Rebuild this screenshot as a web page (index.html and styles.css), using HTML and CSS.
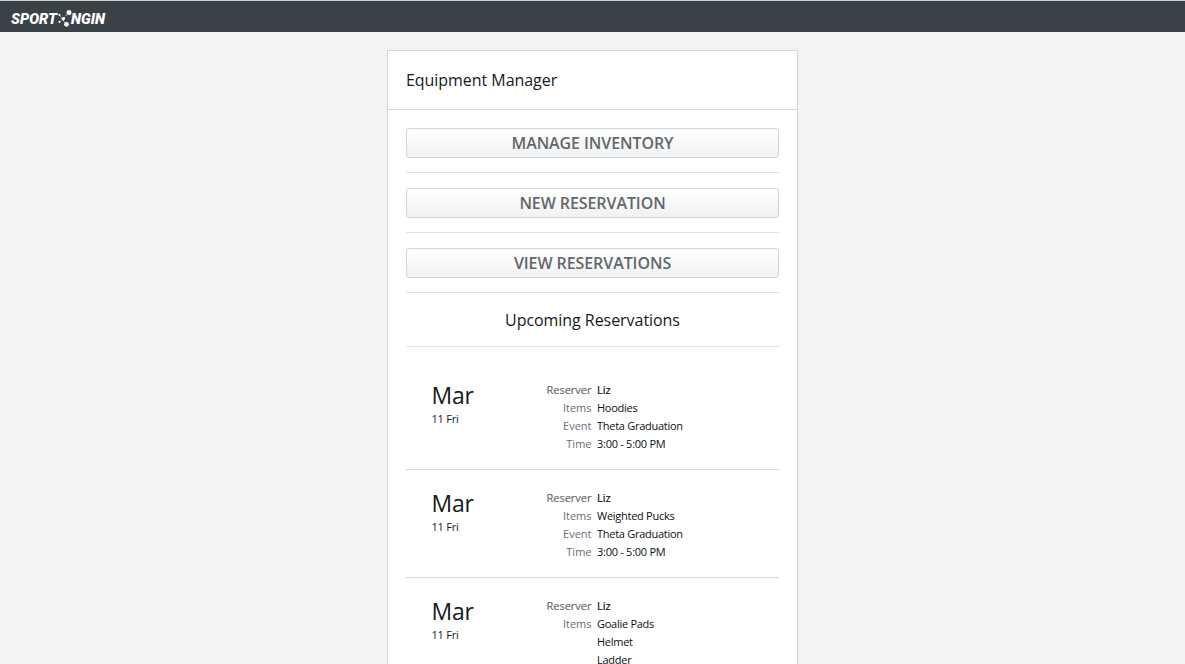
FILE: index.html
```html
<!DOCTYPE html>
<html lang="en">
<head>
<meta charset="utf-8">
<title>Equipment Manager</title>
<link rel="stylesheet" href="styles.css">
</head>
<body>
<header class="topbar">
  <svg class="logo" width="100" height="22" viewBox="0 0 100 22" role="img" aria-label="Sport Ngin">
    <g class="logo-text">
      <text x="1" y="14.6" textLength="46" lengthAdjust="spacingAndGlyphs">SPORT</text>
      <text x="61" y="14.6" textLength="34" lengthAdjust="spacingAndGlyphs">NGIN</text>
    </g>
    <g class="logo-mark">
      <path d="M49.5 6 56 15M59 3.500 50.500 12.500"/>
      <circle cx="59" cy="3.500" r="2.500"/>
      <circle cx="56.500" cy="15.300" r="2.400"/>
      <circle cx="49.500" cy="6" r="1.100"/>
      <circle cx="49.500" cy="12.800" r="1.100"/>
      <circle cx="53.500" cy="9.500" r="1.600"/>
    </g>
  </svg>
</header>
<main class="card">
  <h1 class="card-title">Equipment Manager</h1>
  <div class="card-body">
    <div class="action"><button class="button">MANAGE INVENTORY</button></div>
    <div class="action"><button class="button">NEW RESERVATION</button></div>
    <div class="action"><button class="button">VIEW RESERVATIONS</button></div>
    <h2 class="section-title">Upcoming Reservations</h2>
    <div class="reservations">
      <section class="reservation">
        <div class="date"><div class="month">Mar</div><div class="day">11 Fri</div></div>
        <dl class="details">
          <dt class="strong">Reserver</dt><dd class="strong">Liz</dd>
          <dt>Items</dt><dd>Hoodies</dd>
          <dt>Event</dt><dd>Theta Graduation</dd>
          <dt>Time</dt><dd>3:00 - 5:00 PM</dd>
        </dl>
      </section>
      <section class="reservation">
        <div class="date"><div class="month">Mar</div><div class="day">11 Fri</div></div>
        <dl class="details">
          <dt class="strong">Reserver</dt><dd class="strong">Liz</dd>
          <dt>Items</dt><dd>Weighted Pucks</dd>
          <dt>Event</dt><dd>Theta Graduation</dd>
          <dt>Time</dt><dd>3:00 - 5:00 PM</dd>
        </dl>
      </section>
      <section class="reservation">
        <div class="date"><div class="month">Mar</div><div class="day">11 Fri</div></div>
        <dl class="details">
          <dt class="strong">Reserver</dt><dd class="strong">Liz</dd>
          <dt>Items</dt><dd>Goalie Pads</dd>
          <dd>Helmet</dd>
          <dd>Ladder</dd>
        </dl>
      </section>
    </div>
  </div>
</main>
</body>
</html>
```

FILE: styles.css
```css
* { box-sizing: border-box; }
html, body { height: 100%; }
body {
  margin: 0;
  background: #f1f3f5;
  color: #16191b;
  font-family: "Open Sans", sans-serif;
  overflow: hidden;
}
.topbar {
  height: 32px;
  padding: 8px 10px 0;
  background: #3a4147;
  border-top: 1px solid #c9cccb;
}
.logo { display: block; overflow: visible; }
.logo-text {
  fill: #fff;
  font: italic 900 14px Roboto, "Liberation Sans", sans-serif;
}
.logo-mark { fill: #fff; stroke: none; }
.logo-mark path { stroke: #dfe2e4; stroke-width: 1; stroke-dasharray: 2 1; }
.card {
  width: 411px;
  margin: 18px auto 0;
  background: #fff;
  border: 1px solid #d4d7d9;
  min-height: 640px;
}
.card-title {
  margin: 0;
  height: 59px;
  padding: 0 18px;
  border-bottom: 1px solid #d4d7d9;
  font-size: 16px;
  font-weight: 400;
  letter-spacing: -.05px;
  line-height: 58px;
}
.card-body { padding: 18px 18px 0; }
.action {
  height: 45px;
  margin-bottom: 15px;
  border-bottom: 1px solid #dfe1e2;
}
.button {
  display: block;
  width: 100%;
  height: 30px;
  padding: 0;
  border: 1px solid #d1d6d9;
  border-radius: 3px;
  background: linear-gradient(#fff, #f0f1f3);
  color: #63676a;
  font: 600 16px/28px "Open Sans", sans-serif;
  letter-spacing: -.08px;
}
.section-title {
  margin: -15px 0 0;
  height: 54px;
  border-bottom: 1px solid #dfe1e2;
  font-size: 16px;
  font-weight: 400;
  letter-spacing: -.05px;
  line-height: 54px;
  text-align: center;
}
.reservations { padding-top: 15px; }
.reservation {
  display: flex;
  height: 108px;
  padding-top: 19px;
  border-bottom: 1px solid #d4d7d9;
}
.reservation:last-child { height: auto; border: 0; }
.date { width: 127px; padding-left: 25.5px; }
.month { margin-top: -2px; font-size: 23px; letter-spacing: -.2px; line-height: 32px; }
.day { font-size: 11px; letter-spacing: -.2px; line-height: 16px; }
.details {
  display: grid;
  grid-template-columns: 58.5px 1fr;
  column-gap: 5.5px;
  grid-auto-rows: 18px;
  flex: 1;
  margin: 0;
  font-size: 11px;
  line-height: 18px;
}
.details dt { grid-column: 1; text-align: right; color: #686d73; }
.details dd { grid-column: 2; margin: 0; letter-spacing: -.27px; color: #0c0f11; }
.details .strong { letter-spacing: 0; -webkit-text-stroke: .2px currentColor; }
```
